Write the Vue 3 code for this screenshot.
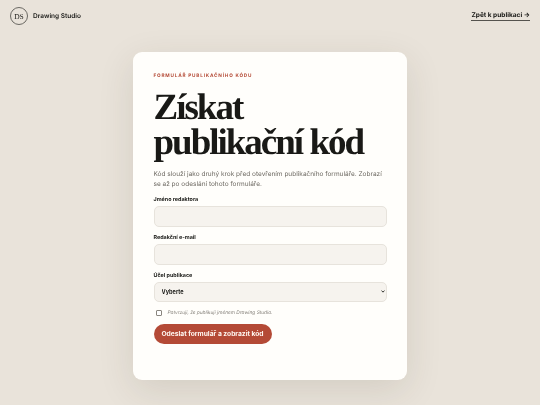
<script setup>
const title = ['Získat', 'publikační kód']
</script>

<template>
  <div class="page">
    <header class="top">
      <div class="brand">
        <span class="mark">DS</span>
        <span class="name">Drawing Studio</span>
      </div>
      <a class="back">Zpět k publikaci →</a>
    </header>
    <main class="card">
      <div class="eyebrow">FORMULÁŘ PUBLIKAČNÍHO KÓDU</div>
      <h1><span v-for="t in title" :key="t">{{ t }}</span></h1>
      <p class="lead">Kód slouží jako druhý krok před otevřením publikačního formuláře. Zobrazí se až po odeslání tohoto formuláře.</p>
      <label class="lab">Jméno redaktora</label>
      <input class="field" type="text" />
      <label class="lab">Redakční e-mail</label>
      <input class="field" type="text" />
      <label class="lab">Účel publikace</label>
      <div class="selwrap">
        <select class="field sel"><option>Vyberte</option></select>
        <svg class="chev" viewBox="0 0 6 4" width="4" height="3" aria-hidden="true">
          <path d="M0.8 0.6 L3 3 L5.2 0.6" fill="none" stroke="#191916" stroke-width="1.3" />
        </svg>
      </div>
      <div class="check">
        <input type="checkbox" />
        <span>Potvrzuji, že publikuji jménem Drawing Studio.</span>
      </div>
      <button class="btn">Odeslat formulář a zobrazit kód</button>
    </main>
  </div>
</template>

<style>
html, body { margin: 0; background: #e9e3da; }
</style>

<style scoped>
.page {
  width: 540px;
  height: 405px;
  overflow: hidden;
  background: #e9e3da;
  font-family: "Inter", "Liberation Sans", sans-serif;
  text-rendering: geometricPrecision;
  color: #191916;
  box-sizing: border-box;
  display: flex;
  flex-direction: column;
  align-items: center;
}
.top {
  align-self: stretch;
  display: flex;
  justify-content: space-between;
  align-items: center;
  padding: 7px 10px 0;
  height: 18px;
  flex: none;
  will-change: transform;
}
.brand { display: flex; align-items: center; gap: 5px; }
.mark {
  width: 18px;
  height: 18px;
  box-sizing: border-box;
  border: 0.75px solid #6a6862;
  border-radius: 50%;
  display: flex;
  align-items: center;
  justify-content: center;
  font: 400 7.5px "Liberation Serif", serif;
}
.name { font-size: 6.5px; font-weight: 600; }
.back {
  font-size: 6.55px;
  font-weight: 700;
  border-bottom: 0.75px solid #55534e;
  padding-bottom: 1px;
}
.card {
  margin-top: 27px;
  width: 274px;
  height: 328px;
  flex: none;
  box-sizing: border-box;
  background: #fffefb;
  border-radius: 9px;
  padding: 21px 20.5px;
  box-shadow: 0 10px 36px rgba(60, 50, 35, 0.12);
  display: flex;
  flex-direction: column;
  will-change: transform;
}
.eyebrow {
  font-size: 4.7px;
  line-height: 6px;
  font-weight: 700;
  letter-spacing: 0.8px;
  color: #b44a36;
}
h1 {
  margin: 10.5px 0 0;
  font: 700 37px/35.5px "Liberation Serif", serif;
  letter-spacing: -2px;
  white-space: nowrap;
}
h1 span { display: block; }
.lead {
  margin: 8px 0 0;
  font-size: 6.5px;
  line-height: 10.6px;
  color: #6f6b64;
}
.lab {
  flex: none;
  font-size: 5.4px;
  line-height: 8px;
  font-weight: 700;
}
.lead + .lab { margin-top: 6px; }
.field {
  flex: none;
  display: block;
  margin: 2px 0 7px;
  height: 21px;
  box-sizing: border-box;
  width: 100%;
  background: #f6f3ee;
  border: 0.75px solid #e7e3dc;
  border-radius: 5px;
  padding: 0 6px;
  outline: none;
}
.selwrap { position: relative; flex: none; }
.sel {
  height: 20px;
  margin-bottom: 0;
  padding: 0 7px;
  appearance: none;
  font: 700 5.6px "Inter", sans-serif;
  color: #191916;
}
.chev { position: absolute; right: 2px; top: 10.5px; }
.check {
  flex: none;
  display: flex;
  align-items: center;
  gap: 6px;
  margin-top: 6px;
  height: 10px;
  padding-left: 2px;
  font-size: 4.8px;
  font-style: italic;
  color: #85817a;
}
.check input { width: 6px; height: 6px; margin: 0; appearance: none; border: 0.75px solid #8a867f; border-radius: 1px; background: #fff; }
.btn {
  flex: none;
  margin-top: 6px;
  align-self: flex-start;
  height: 20px;
  width: 118px;
  padding: 0;
  border: 0;
  border-radius: 10px;
  background: #b44a36;
  color: #fff8f2;
  font: 700 6.7px "Inter", sans-serif;
  white-space: nowrap;
}
</style>
